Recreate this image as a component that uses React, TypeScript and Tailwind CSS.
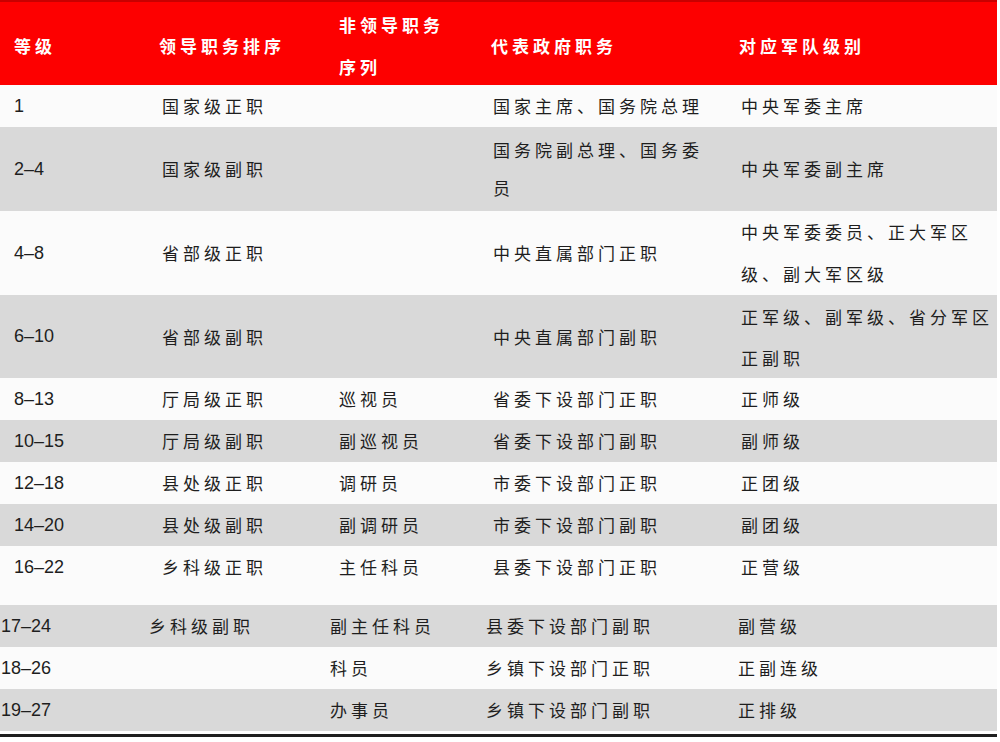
import React from "react";

type Row = {
  n: string;
  a: string;
  b: string;
  c: string[];
  d: string[];
  h: string;
  bg: string;
  lead: string;
  shift?: boolean;
  top?: boolean;
};

const WHITE = "bg-[#fbfbfb]";
const GRAY = "bg-[#d9d9d9]";

const rows: Row[] = [
  { n: "1", a: "国家级正职", b: "", c: ["国家主席、国务院总理"], d: ["中央军委主席"], h: "h-[42px]", bg: WHITE, lead: "leading-[42px]" },
  { n: "2–4", a: "国家级副职", b: "", c: ["国务院副总理、国务委", "员"], d: ["中央军委副主席"], h: "h-[84px]", bg: GRAY, lead: "leading-[38px]" },
  { n: "4–8", a: "省部级正职", b: "", c: ["中央直属部门正职"], d: ["中央军委委员、正大军区", "级、副大军区级"], h: "h-[84px]", bg: WHITE, lead: "leading-[42px]" },
  { n: "6–10", a: "省部级副职", b: "", c: ["中央直属部门副职"], d: ["正军级、副军级、省分军区", "正副职"], h: "h-[83px]", bg: GRAY, lead: "leading-[41px]" },
  { n: "8–13", a: "厅局级正职", b: "巡视员", c: ["省委下设部门正职"], d: ["正师级"], h: "h-[42px]", bg: WHITE, lead: "leading-[42px]" },
  { n: "10–15", a: "厅局级副职", b: "副巡视员", c: ["省委下设部门副职"], d: ["副师级"], h: "h-[42px]", bg: GRAY, lead: "leading-[42px]" },
  { n: "12–18", a: "县处级正职", b: "调研员", c: ["市委下设部门正职"], d: ["正团级"], h: "h-[42px]", bg: WHITE, lead: "leading-[42px]" },
  { n: "14–20", a: "县处级副职", b: "副调研员", c: ["市委下设部门副职"], d: ["副团级"], h: "h-[42px]", bg: GRAY, lead: "leading-[42px]" },
  { n: "16–22", a: "乡科级正职", b: "主任科员", c: ["县委下设部门正职"], d: ["正营级"], h: "h-[59px]", bg: WHITE, lead: "leading-[42px]", top: true },
  { n: "17–24", a: "乡科级副职", b: "副主任科员", c: ["县委下设部门副职"], d: ["副营级"], h: "h-[42px]", bg: GRAY, lead: "leading-[42px]", shift: true },
  { n: "18–26", a: "", b: "科员", c: ["乡镇下设部门正职"], d: ["正副连级"], h: "h-[42px]", bg: WHITE, lead: "leading-[42px]", shift: true },
  { n: "19–27", a: "", b: "办事员", c: ["乡镇下设部门副职"], d: ["正排级"], h: "h-[42px]", bg: GRAY, lead: "leading-[42px]", shift: true },
];

const cjk = "font-['Noto_Sans_CJK_SC',sans-serif]";

function Cell({ lines, lead }: { lines: string[]; lead: string }) {
  return (
    <div className={`flex flex-col justify-center ${cjk} text-[17px] tracking-[4px] text-[#1e1e1e] whitespace-nowrap ${lead}`}>
      {lines.map((l, i) => (
        <span key={i} className="block">
          {l}
        </span>
      ))}
    </div>
  );
}

export default function App() {
  return (
    <div className="w-[1000px] h-[742px] bg-white overflow-hidden">
      <div className="w-[997px]">
        {/* header */}
        <div className="h-[85px] bg-[#fd0000] border-t-2 border-[#c80000] pl-[14px] pt-[2px] grid grid-cols-[145px_180px_152px_248px_1fr] items-center font-bold text-white text-[17px] tracking-[4px] font-['Noto_Sans_CJK_SC',sans-serif]">
          <div className="leading-[42px]">等级</div>
          <div className="leading-[42px]">领导职务排序</div>
          <div className="leading-[42px]">
            <span className="block">非领导职务</span>
            <span className="block">序列</span>
          </div>
          <div className="leading-[42px]">代表政府职务</div>
          <div className="leading-[42px]">对应军队级别</div>
        </div>

        {rows.map((r, i) => (
          <div
            key={i}
            className={`${r.h} ${r.bg} grid ${
              r.shift
                ? "pl-[1px] grid-cols-[148px_181px_156px_252px_1fr]"
                : "pl-[14px] grid-cols-[148px_177px_154px_248px_1fr]"
            } ${r.top ? "items-start" : "items-stretch"}`}
          >
            <div className={`flex items-center font-['Liberation_Sans',Arial,sans-serif] text-[18px] text-[#1e1e1e] ${r.top ? "h-[42px]" : ""}`}>
              {r.n}
            </div>
            <div className={r.top ? "h-[42px] flex" : "flex"}>
              <Cell lines={r.a ? [r.a] : []} lead={r.lead} />
            </div>
            <div className={r.top ? "h-[42px] flex" : "flex"}>
              <Cell lines={r.b ? [r.b] : []} lead={r.lead} />
            </div>
            <div className={r.top ? "h-[42px] flex" : "flex"}>
              <Cell lines={r.c} lead={r.lead} />
            </div>
            <div className={r.top ? "h-[42px] flex" : "flex"}>
              <Cell lines={r.d} lead={r.lead} />
            </div>
          </div>
        ))}

        <div className="h-[3px] bg-white" />
        <div className="h-[3px] bg-[#1f1f1f]" />
      </div>
    </div>
  );
}
